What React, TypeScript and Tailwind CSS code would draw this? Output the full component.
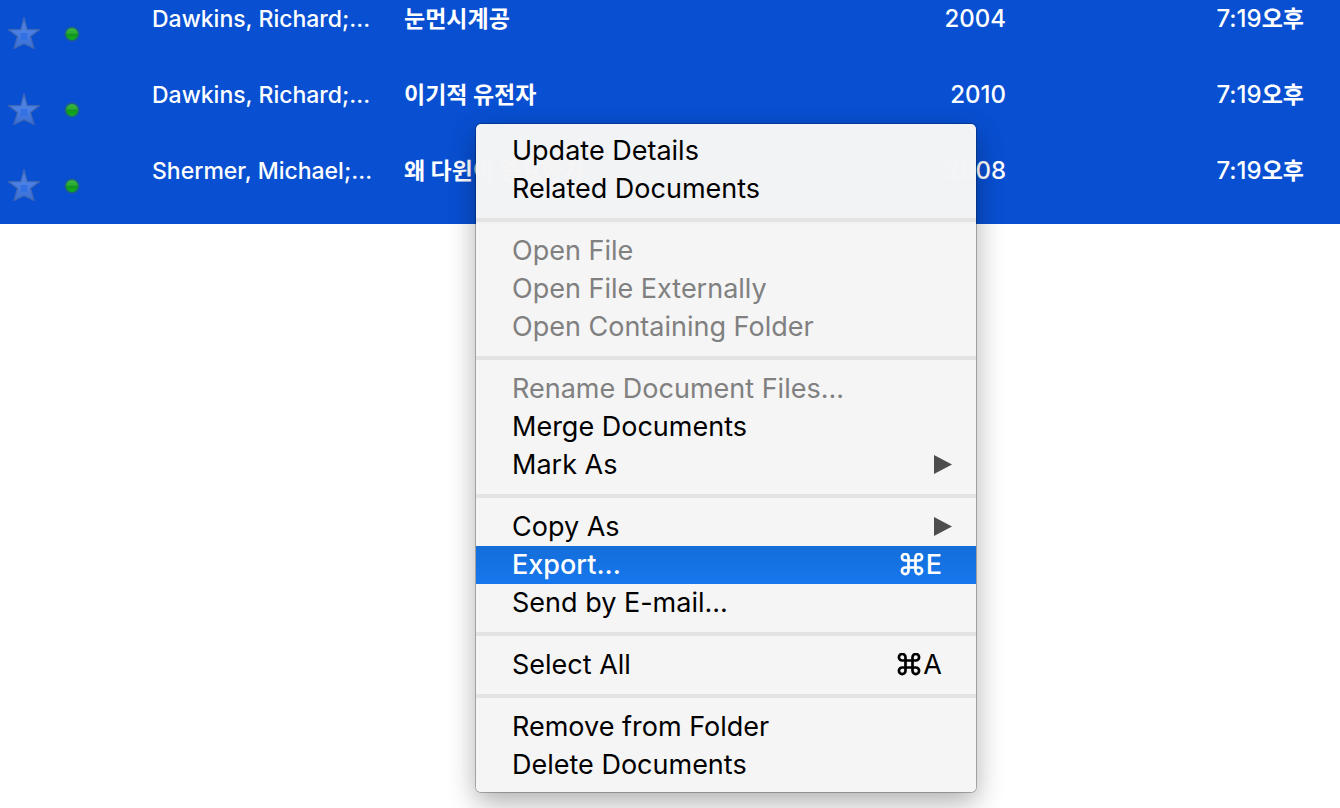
type Doc = { authors: string; title: string; year: string; time: string };
type Item = { label: string; disabled?: boolean; submenu?: boolean; shortcut?: string; active?: boolean };

const docs: Doc[] = [
  { authors: "Dawkins, Richard;…", title: "눈먼시계공", year: "2004", time: "7:19" },
  { authors: "Dawkins, Richard;…", title: "이기적 유전자", year: "2010", time: "7:19" },
  { authors: "Shermer, Michael;…", title: "왜 다윈이 중요한가", year: "2008", time: "7:19" },
];

const groups: Item[][] = [
  [{ label: "Update Details" }, { label: "Related Documents" }],
  [
    { label: "Open File", disabled: true },
    { label: "Open File Externally", disabled: true },
    { label: "Open Containing Folder", disabled: true },
  ],
  [
    { label: "Rename Document Files...", disabled: true },
    { label: "Merge Documents" },
    { label: "Mark As", submenu: true },
  ],
  [
    { label: "Copy As", submenu: true },
    { label: "Export...", shortcut: "E", active: true },
    { label: "Send by E-mail..." },
  ],
  [{ label: "Select All", shortcut: "A" }],
  [{ label: "Remove from Folder" }, { label: "Delete Documents" }],
];

function Star() {
  return (
    <svg viewBox="0 0 32 32" className="h-8 w-8" aria-hidden="true">
      <defs>
        <linearGradient id="starFill" x1="0" y1="0" x2="0" y2="1">
          <stop offset="0" stopColor="#5482d8" />
          <stop offset="0.5" stopColor="#4a80e6" />
          <stop offset="1" stopColor="#3a6fd2" />
        </linearGradient>
      </defs>
      <path
        d="M16 0.8 L19.2 12.6 H31.5 L22.5 19.4 L26 31.4 L16 26.6 L6 31.4 L9.5 19.4 L0.5 12.6 H12.8 Z"
        fill="url(#starFill)"
        stroke="#3f67b4"
        strokeWidth="1.2"
      />
      <path d="M12.5 16 H19.5 L19 20 L20.2 24 L16 22.4 L11.8 24 L13 20 Z" fill="#3271e2" />
    </svg>
  );
}

function Dot() {
  return (
    <svg viewBox="0 0 16 16" className="h-4 w-4" aria-hidden="true">
      <defs>
        <linearGradient id="dotFill" x1="0" y1="0" x2="0" y2="1">
          <stop offset="0" stopColor="#3fb847" />
          <stop offset="0.4" stopColor="#2cab36" />
          <stop offset="0.55" stopColor="#12961e" />
          <stop offset="1" stopColor="#10b41c" />
        </linearGradient>
      </defs>
      <circle cx="8" cy="8" r="6.8" fill="url(#dotFill)" stroke="#1e5f86" strokeWidth="1.6" />
    </svg>
  );
}

function Command() {
  return (
    <svg viewBox="0 0 24 24" className="h-6 w-6" fill="none" stroke="currentColor" strokeWidth="2.7" aria-hidden="true">
      <path d="M8.5 7.5 H15.5 V14.5 H8.5 Z M8.5 7.5 H5.2 A3.3 3.3 0 1 1 8.5 4.2 Z M15.5 7.5 V4.2 A3.3 3.3 0 1 1 18.8 7.5 Z M15.5 14.5 H18.8 A3.3 3.3 0 1 1 15.5 17.8 Z M8.5 14.5 V17.8 A3.3 3.3 0 1 1 5.2 14.5 Z" />
    </svg>
  );
}

function MenuItem({ item }: { item: Item }) {
  const tone = item.active
    ? "bg-linear-to-b from-[#146ed9] to-[#1677ee] text-white font-medium"
    : item.disabled
      ? "text-[#808080]"
      : "text-black";
  return (
    <button
      type="button"
      role="menuitem"
      disabled={item.disabled}
      aria-haspopup={item.submenu ? "menu" : undefined}
      className={`flex h-[38px] w-full items-center justify-between pl-9 text-left whitespace-nowrap ${item.submenu ? "pr-6" : "pr-[34px]"} ${tone}`}
    >
      <span>{item.label}</span>
      {item.submenu && (
        <svg viewBox="0 0 18 20" className="h-5 w-[18px] text-[#4d4d4d]" fill="currentColor" aria-hidden="true">
          <path d="M0 0 L18 9.5 L0 19 Z" />
        </svg>
      )}
      {item.shortcut && (
        <span className="flex items-center gap-0.5">
          <Command />
          <span>{item.shortcut}</span>
        </span>
      )}
    </button>
  );
}

export default function App() {
  return (
    <main className="relative min-h-screen overflow-hidden bg-white font-['Inter','Noto_Sans_CJK_KR',sans-serif]">
      <table className="w-full table-fixed border-collapse bg-[#084fd1] text-[23px] leading-[30px] font-medium text-white">
        <colgroup>
          <col className="w-12" />
          <col className="w-26" />
          <col className="w-63" />
          <col />
          <col className="w-50" />
          <col className="w-83" />
        </colgroup>
        <tbody>
          {docs.map((doc) => (
            <tr key={doc.title} className="h-19 align-top first:h-18 [&>td]:pt-2 first:[&>td]:pt-1">
              <td>
                <button type="button" aria-label="Favorite" className="mt-[13px] ml-2 block w-8">
                  <Star />
                </button>
              </td>
              <td>
                <div className="mt-[22px] ml-4">
                  <Dot />
                </div>
              </td>
              <td className="whitespace-nowrap">{doc.authors}</td>
              <td className="font-bold whitespace-nowrap">{doc.title}</td>
              <td className="pr-0.5 text-right text-2xl leading-[30px]">{doc.year}</td>
              <td className="pr-9 text-right text-2xl leading-[30px]">
                {doc.time}
                <span className="text-[23px] font-bold">오후</span>
              </td>
            </tr>
          ))}
        </tbody>
      </table>

      <div
        role="menu"
        className="absolute top-[124px] left-[476px] w-[500px] rounded-[5px] bg-[#f5f5f5]/99 py-2 text-[27px] leading-[38px] shadow-[0_0_0_1px_rgba(0,0,0,0.25),0_10px_28px_rgba(0,0,0,0.32)]"
      >
        {groups.map((group, index) => (
          <div key={group[0].label}>
            {index > 0 && <div role="separator" className="my-2.5 h-1 bg-[#e3e3e3]" />}
            {group.map((item) => (
              <MenuItem key={item.label} item={item} />
            ))}
          </div>
        ))}
      </div>
    </main>
  );
}
